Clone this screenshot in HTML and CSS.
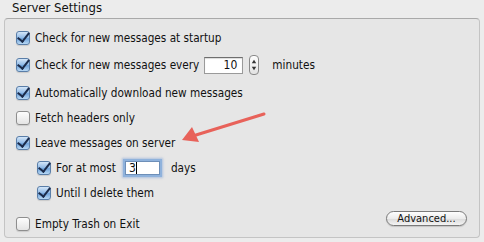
FILE: index.html
```html
<!DOCTYPE html>
<html lang="en">
<head>
  <meta charset="UTF-8" />
  <title>Server Settings</title>
  <link rel="stylesheet" href="styles.css">
</head>
<body>

  <h2 class="group-title">Server Settings</h2>

  <div class="group-box">

    <label class="row">
      <span class="check on"></span>
      Check for new messages at startup
    </label>

    <div class="row row-tall">
      <span class="check on"></span>
      <span>Check for new messages every</span>
      <span class="field field-num">10</span>
      <span class="stepper">
        <svg width="9" height="20" viewBox="0 0 9 20">
          <path d="M4.5 4 L7 8 L2 8 Z" fill="#333"/>
          <path d="M4.5 16 L7 12 L2 12 Z" fill="#333"/>
        </svg>
      </span>
      <span class="unit">minutes</span>
    </div>

    <label class="row">
      <span class="check on"></span>
      Automatically download new messages
    </label>

    <label class="row">
      <span class="check"></span>
      Fetch headers only
    </label>

    <label class="row">
      <span class="check on"></span>
      Leave messages on server
    </label>

    <!-- nested options under "leave on server" -->
    <div class="row sub">
      <span class="check on"></span>
      <span>For at most</span>
      <span class="field field-focus">3<i class="caret"></i></span>
      <span class="unit">days</span>
    </div>

    <label class="row sub">
      <span class="check on"></span>
      Until I delete them
    </label>

    <div class="row row-last">
      <label class="row-inline">
        <span class="check"></span>
        Empty Trash on Exit
      </label>
      <button class="pill">Advanced...</button>
    </div>

  </div>

  <!-- annotation arrow -->
  <svg class="arrow" width="90" height="34" viewBox="0 0 90 34">
    <line x1="84" y1="3" x2="16" y2="24" stroke="#e8625a" stroke-width="3" stroke-linecap="round"/>
    <path d="M2 29 L12 16 L19 31 Z" fill="#e8625a"/>
  </svg>

</body>
</html>
```

FILE: styles.css
```css
* {
  box-sizing: border-box;
  margin: 0;
  padding: 0;
}

body {
  font-family: 'DejaVu Sans Condensed', 'DejaVu Sans', sans-serif;
  font-stretch: condensed;
  font-size: 11.7px;
  color: #111;
  background-color: #ececec;
  width: 484px;
  height: 242px;
  overflow: hidden;
  position: relative;
}

.group-title {
  font-size: 13px;
  font-weight: normal;
  height: 18px;
  line-height: 16px;
  padding-left: 12px;
}

.group-box {
  margin-left: 4px;
  width: 476px;
  height: 220px;
  background: #e6e6e6;
  border: 1px solid #c4c4c4;
  border-top-color: #a9a9a9;
  border-radius: 4px;
  padding: 6px 12px 0 11px;
  display: flex;
  flex-direction: column;
}

.row {
  height: 25px;
  display: flex;
  align-items: center;
  gap: 5px;
}

.row-tall {
  height: 30px;
}

.row.sub {
  padding-left: 21px;
}

.row-last {
  margin-top: 6px;
  justify-content: space-between;
}

.row-inline {
  display: flex;
  align-items: center;
  gap: 5px;
}

.check {
  width: 14px;
  height: 14px;
  flex: none;
  border: 1px solid #8e8e8e;
  border-radius: 3px;
  background: linear-gradient(#fdfdfd, #e4e4e4);
  box-shadow: 0 1px 1px rgba(0, 0, 0, 0.12);
  position: relative;
}

.check.on {
  border-color: #5a7ea8;
  background: linear-gradient(#d4e6f8, #8db8e6 50%, #6fa3db 55%, #b8d8f4);
}

.check.on::after {
  content: "";
  position: absolute;
  left: 3px;
  top: -2px;
  width: 5px;
  height: 10px;
  border: solid #1b2b4a;
  border-width: 0 2.5px 2.5px 0;
  transform: rotate(38deg);
}

.field {
  background: #fff;
  border: 1px solid #9a9a9a;
  border-top-color: #6e6e6e;
  box-shadow: inset 0 1px 1px rgba(0, 0, 0, 0.15);
  font-size: 12px;
  line-height: 15px;
}

.field-num {
  width: 39px;
  height: 17px;
  text-align: right;
  padding-right: 5px;
}

.stepper {
  width: 10px;
  height: 20px;
  border: 1px solid #8a8a8a;
  border-radius: 4px;
  background: linear-gradient(#fdfdfd, #e2e2e2);
  display: flex;
  align-items: center;
  justify-content: center;
  margin-left: 1px;
}

.stepper svg {
  display: block;
}

.unit {
  margin-left: 8px;
}

.field-focus {
  width: 35px;
  height: 14px;
  margin: 0 -2px 0 4px;
  padding-left: 3px;
  line-height: 13px;
  border-color: #6e8fb8;
  box-shadow: 0 0 0 2px #8fb2dc, 0 0 2px 3px rgba(120, 160, 215, 0.5);
}

.caret {
  display: inline-block;
  width: 1px;
  height: 12px;
  background: #000;
  vertical-align: -2px;
}

.pill {
  font-family: 'DejaVu Sans Condensed', 'DejaVu Sans', sans-serif;
  font-stretch: condensed;
  font-size: 11px;
  color: #111;
  height: 15px;
  width: 81px;
  align-self: flex-start;
  border: 1px solid #7a7a7a;
  border-radius: 8px;
  background: linear-gradient(#fefefe, #ececec 50%, #dcdcdc 55%, #f4f4f4);
  box-shadow: 0 1px 1px rgba(0, 0, 0, 0.15);
  line-height: 13px;
}

.arrow {
  position: absolute;
  left: 180px;
  top: 111px;
}
```
